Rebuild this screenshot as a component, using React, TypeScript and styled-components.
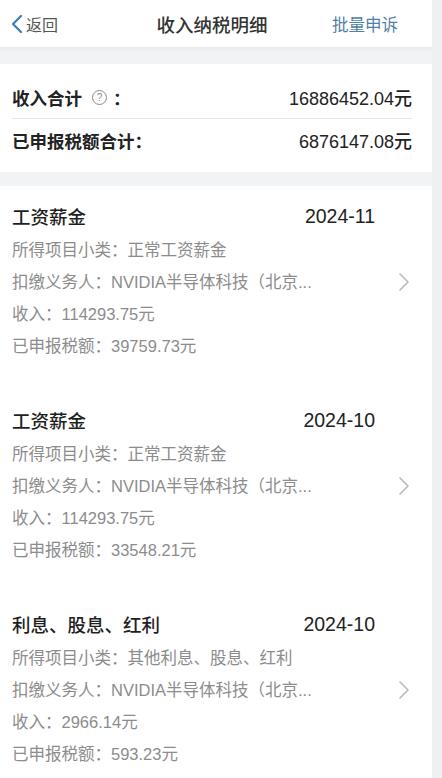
import React from 'react';
import styled, { createGlobalStyle } from 'styled-components';

const GlobalStyle = createGlobalStyle`
  html, body {
    margin: 0;
    padding: 0;
    background: #f2f3f5;
  }
  body {
    font-family: "Liberation Sans", "Noto Sans CJK SC", sans-serif;
    color: #222;
  }
`;

type Record = {
  title: string;
  date: string;
  subtype: string;
  payer: string;
  income: string;
  tax: string;
};

const records: Record[] = [
  {
    title: '工资薪金',
    date: '2024-11',
    subtype: '正常工资薪金',
    payer: 'NVIDIA半导体科技（北京...',
    income: '114293.75元',
    tax: '39759.73元',
  },
  {
    title: '工资薪金',
    date: '2024-10',
    subtype: '正常工资薪金',
    payer: 'NVIDIA半导体科技（北京...',
    income: '114293.75元',
    tax: '33548.21元',
  },
  {
    title: '利息、股息、红利',
    date: '2024-10',
    subtype: '其他利息、股息、红利',
    payer: 'NVIDIA半导体科技（北京...',
    income: '2966.14元',
    tax: '593.23元',
  },
];

const App = () => {
  return (
    <Screen>
      <GlobalStyle />
      <Main>
        <Header>
          <BackButton>
            <svg width="13" height="20" viewBox="0 0 13 20">
              <path d="M11 2 L3 10 L11 18" fill="none" stroke="#3f7cab" strokeWidth="2.2" strokeLinecap="round" strokeLinejoin="round" />
            </svg>
            <span>返回</span>
          </BackButton>
          <Title>收入纳税明细</Title>
          <HeaderAction>批量申诉</HeaderAction>
        </Header>

        <SummaryCard>
          <SummaryRow>
            <SummaryLabel>
              收入合计
              <HelpIcon>?</HelpIcon>
              ：
            </SummaryLabel>
            <SummaryValue>16886452.04元</SummaryValue>
          </SummaryRow>
          <Divider />
          <SummaryRow>
            <SummaryLabel>已申报税额合计：</SummaryLabel>
            <SummaryValue>6876147.08元</SummaryValue>
          </SummaryRow>
        </SummaryCard>

        <ListCard>
          {records.map((r, i) => (
            <Item key={i}>
              <ItemBody>
                <ItemHead>
                  <ItemTitle>{r.title}</ItemTitle>
                  <ItemDate>{r.date}</ItemDate>
                </ItemHead>
                <Line>所得项目小类：{r.subtype}</Line>
                <Line>扣缴义务人：{r.payer}</Line>
                <Line>收入：{r.income}</Line>
                <Line>已申报税额：{r.tax}</Line>
              </ItemBody>
              <Arrow>
                <svg width="12" height="20" viewBox="0 0 12 20">
                  <path d="M2 2 L10 10 L2 18" fill="none" stroke="#b8b8b8" strokeWidth="1.6" strokeLinecap="round" strokeLinejoin="round" />
                </svg>
              </Arrow>
            </Item>
          ))}
        </ListCard>
      </Main>
      <Gutter />
    </Screen>
  );
};

export default App;

const Screen = styled.div`
  display: flex;
  width: 442px;
  height: 778px;
  overflow: hidden;
  background: #f2f3f5;
`;

const Main = styled.div`
  width: 432px;
  display: flex;
  flex-direction: column;
  overflow: hidden;

  & > * {
    flex-shrink: 0;
  }
`;

const Gutter = styled.div`
  flex: 1;
  background: #eff0f2;
`;

const Header = styled.div`
  height: 47px;
  padding-right: 8px;
  background: #fff;
  display: grid;
  grid-template-columns: 1fr auto 1fr;
  align-items: center;
  box-shadow: 0 2px 5px rgba(0, 0, 0, 0.05);
  position: relative;
  z-index: 1;
`;

const BackButton = styled.div`
  display: flex;
  align-items: center;
  gap: 3px;
  padding-left: 10px;
  font-size: 16px;
  color: #555;
`;

const Title = styled.div`
  font-size: 18.5px;
  color: #333;
  font-weight: 500;
`;

const HeaderAction = styled.div`
  justify-self: end;
  padding-right: 26px;
  font-size: 16.5px;
  color: #4f7fa3;
`;

const SummaryCard = styled.div`
  margin-top: 17px;
  background: #fff;
  padding: 12px 20px 11px 12px;
`;

const SummaryRow = styled.div`
  height: 42px;
  display: flex;
  align-items: center;
  justify-content: space-between;
`;

const SummaryLabel = styled.div`
  display: flex;
  align-items: center;
  font-size: 17.5px;
  font-weight: 700;
  color: #222;
`;

const HelpIcon = styled.span`
  width: 13px;
  height: 13px;
  border: 1px solid #8a8a8a;
  border-radius: 50%;
  margin: 0 6px 0 10px;
  font-size: 10px;
  font-weight: 400;
  color: #8a8a8a;
  display: flex;
  align-items: center;
  justify-content: center;
`;

const SummaryValue = styled.div`
  font-size: 18px;
  font-weight: 500;
  color: #222;
`;

const Divider = styled.div`
  height: 1px;
  background: #e6e6e6;
`;

const ListCard = styled.div`
  margin-top: 14px;
  background: #fff;
  flex: 1 0 auto;
`;

const Item = styled.div`
  display: flex;
  align-items: center;
  padding: 16px 0 28px 12px;
`;

const ItemBody = styled.div`
  width: 363px;
  display: flex;
  flex-direction: column;
`;

const ItemHead = styled.div`
  height: 28px;
  margin-bottom: 4px;
  display: flex;
  align-items: center;
  justify-content: space-between;
`;

const ItemTitle = styled.div`
  font-size: 18.5px;
  color: #1f1f1f;
  font-weight: 500;
`;

const ItemDate = styled.div`
  font-size: 19.5px;
  color: #222;
`;

const Line = styled.div`
  line-height: 32px;
  font-size: 16.5px;
  color: #8c8c8c;
  white-space: nowrap;
`;

const Arrow = styled.div`
  flex: 1;
  display: flex;
  justify-content: center;
`;
